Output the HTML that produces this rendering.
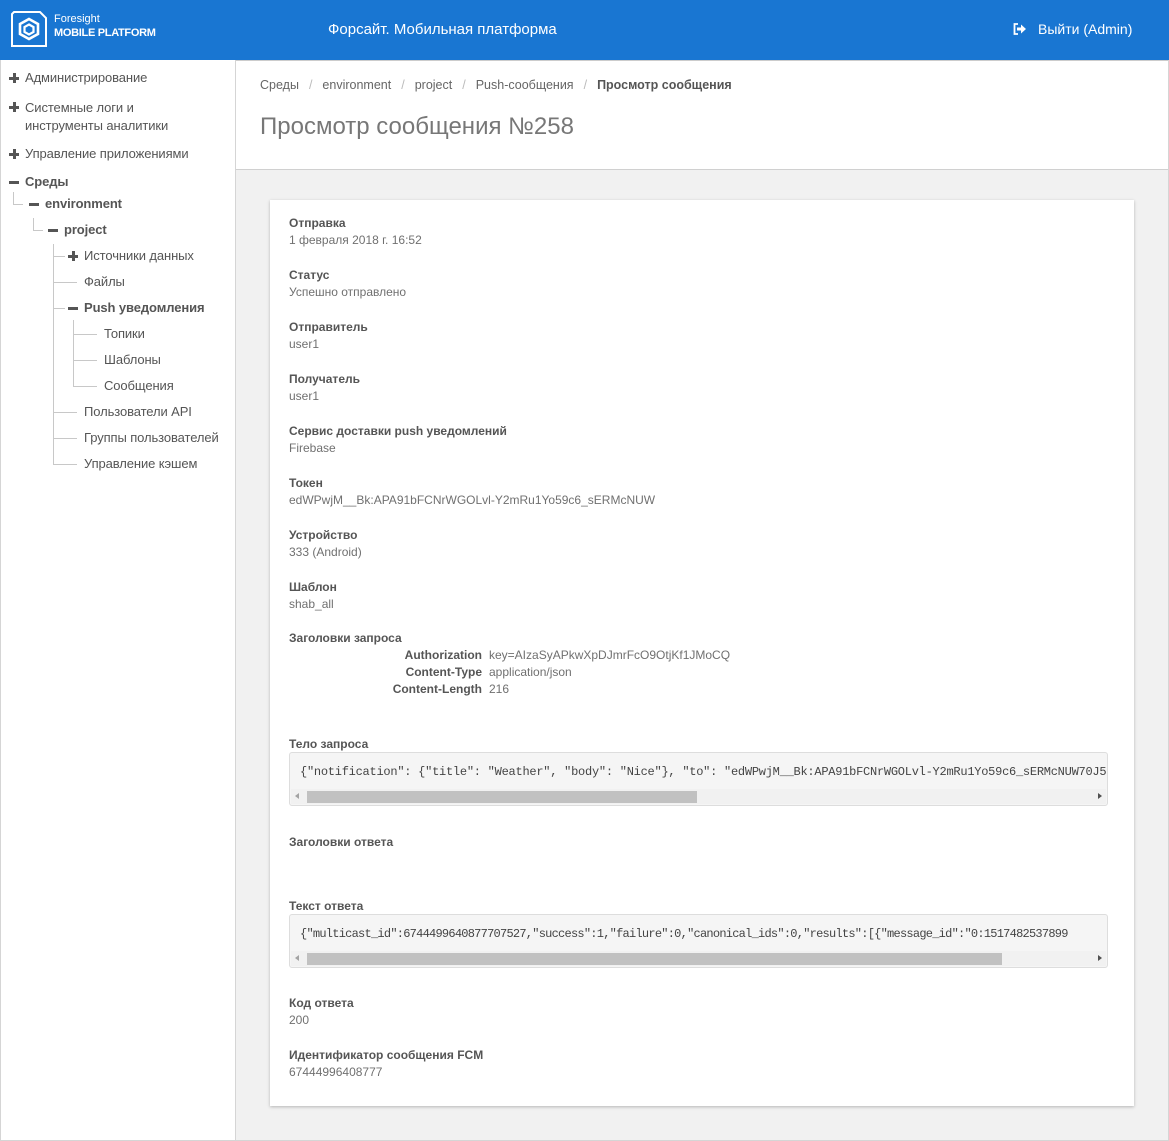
<!DOCTYPE html>
<html><head><meta charset="utf-8"><style>
*{box-sizing:border-box;margin:0;padding:0}
body{width:1169px;height:1141px;overflow:hidden;font-family:"Liberation Sans",sans-serif;background:#fff;position:relative;color:#555}
.hdr{position:absolute;left:0;top:0;width:1169px;height:60px;background:#1976d2;color:#fff}
.side{position:absolute;left:0;top:60px;width:236px;height:1081px;border-right:1px solid #d5d5d5;border-left:1px solid #d5d5d5;border-bottom:1px solid #d5d5d5;background:#fff}
.t{position:absolute;font-size:13px;color:#555;white-space:nowrap;letter-spacing:-0.1px}
.b{font-weight:bold}
.ln{position:absolute;background:#c8c8c8}
.plus,.minus{position:absolute;width:10px;height:10px}
.plus:before,.minus:before{content:"";position:absolute;left:0;top:4px;width:10px;height:2.5px;background:#555}
.plus:after{content:"";position:absolute;left:4px;top:0;width:2.5px;height:10px;background:#555}
.main{position:absolute;left:236px;top:60px;width:933px;height:1081px;background:#f1f1f1;border-right:1px solid #d5d5d5;border-bottom:1px solid #d5d5d5}
.top{position:absolute;left:0;top:0;width:932px;height:110px;background:#fff;border-bottom:1px solid #d0d0d0;border-top:1px solid #ccc}
.card{position:absolute;left:34px;top:140px;width:864px;height:906px;background:#fff;box-shadow:0 1px 3px rgba(0,0,0,.25)}
.lab{position:absolute;left:19px;font-size:12px;font-weight:bold;color:#555}
.val{position:absolute;left:19px;font-size:12px;color:#707070}
.pre{position:absolute;left:19px;width:819px;height:54px;background:#f5f5f5;border:1px solid #ddd;border-radius:3px;overflow:hidden}
.pre .c{position:absolute;left:10px;top:12px;font-family:"Liberation Mono",monospace;font-size:12px;color:#444;white-space:nowrap}
.sb{position:absolute;left:1px;right:1px;bottom:1px;height:15px;background:#f1f1f1}
.sb .th{position:absolute;left:16px;top:2px;height:12px;background:#c1c1c1}
.sb .la{position:absolute;left:4px;top:4px;border:3px solid transparent;border-right:4px solid #a3a3a3;border-left:0}
.sb .ra{position:absolute;right:4px;top:4px;border:3px solid transparent;border-left:4px solid #505050;border-right:0}
.sep{color:#bbb;margin:0 10px}
</style></head><body>
<div class="hdr">
  <svg style="position:absolute;left:10px;top:10px" width="38" height="38" viewBox="0 0 38 38">
    <path d="M4 2 H30 L36 8 V36 H2 V4 Z" fill="none" stroke="#fff" stroke-width="2"/>
    <path d="M19 9 L28 14 V24 L19 29 L10 24 V14 Z" fill="none" stroke="#fff" stroke-width="2.6"/>
    <path d="M19 14.5 L23.5 17 V22 L19 24.5 L14.5 22 V17 Z" fill="none" stroke="#fff" stroke-width="2.2"/>
  </svg>
  <div style="position:absolute;left:54px;top:13px;font-size:11px">Foresight</div>
  <div style="position:absolute;left:54px;top:27px;font-size:11px;font-weight:bold;letter-spacing:-0.3px">MOBILE PLATFORM</div>
  <div style="position:absolute;left:328px;top:21px;font-size:15px">Форсайт. Мобильная платформа</div>
  <svg style="position:absolute;left:1013px;top:23px" width="14" height="12" viewBox="0 0 14 12"><path d="M5 1H1.5V11H5" fill="none" stroke="#fff" stroke-width="1.8"/><path d="M4 4.5H8V1.5L13 6L8 10.5V7.5H4Z" fill="#fff"/></svg>
  <div style="position:absolute;left:1038px;top:21px;font-size:14px">Выйти (Admin)</div>
</div>
<div class="side">
  <div class="plus" style="left:8px;top:13px"></div><div class="t" style="left:24px;top:10px">Администрирование</div>
  <div class="plus" style="left:8px;top:42px"></div><div class="t" style="left:24px;top:39px;line-height:18px">Системные логи и<br>инструменты аналитики</div>
  <div class="plus" style="left:8px;top:89px"></div><div class="t" style="left:24px;top:86px">Управление приложениями</div>
  <div class="minus" style="left:8px;top:117px"></div><div class="t b" style="left:24px;top:114px">Среды</div>
  <div class="ln" style="left:12px;top:132px;width:1px;height:13px"></div><div class="ln" style="left:12px;top:144px;width:10px;height:1px"></div>
  <div class="minus" style="left:28px;top:139px"></div><div class="t b" style="left:44px;top:136px">environment</div>
  <div class="ln" style="left:32px;top:158px;width:1px;height:13px"></div><div class="ln" style="left:32px;top:170px;width:10px;height:1px"></div>
  <div class="minus" style="left:47px;top:165px"></div><div class="t b" style="left:63px;top:162px">project</div>
  <div class="ln" style="left:52px;top:184px;width:1px;height:221px"></div>
  <div class="ln" style="left:52px;top:196px;width:12px;height:1px"></div>
  <div class="plus" style="left:67px;top:191px"></div><div class="t" style="left:83px;top:188px">Источники данных</div>
  <div class="ln" style="left:52px;top:222px;width:24px;height:1px"></div><div class="t" style="left:83px;top:214px">Файлы</div>
  <div class="ln" style="left:52px;top:248px;width:12px;height:1px"></div>
  <div class="minus" style="left:67px;top:243px"></div><div class="t b" style="left:83px;top:240px">Push уведомления</div>
  <div class="ln" style="left:72px;top:260px;width:1px;height:67px"></div>
  <div class="ln" style="left:72px;top:274px;width:24px;height:1px"></div><div class="t" style="left:103px;top:266px">Топики</div>
  <div class="ln" style="left:72px;top:300px;width:24px;height:1px"></div><div class="t" style="left:103px;top:292px">Шаблоны</div>
  <div class="ln" style="left:72px;top:326px;width:24px;height:1px"></div><div class="t" style="left:103px;top:318px">Сообщения</div>
  <div class="ln" style="left:52px;top:352px;width:24px;height:1px"></div><div class="t" style="left:83px;top:344px">Пользователи API</div>
  <div class="ln" style="left:52px;top:378px;width:24px;height:1px"></div><div class="t" style="left:83px;top:370px">Группы пользователей</div>
  <div class="ln" style="left:52px;top:404px;width:24px;height:1px"></div><div class="t" style="left:83px;top:396px">Управление кэшем</div>
</div>
<div class="main">
  <div class="top">
    <div style="position:absolute;left:24px;top:17px;font-size:12.5px;color:#666;white-space:nowrap">Среды<span class="sep">/</span>environment<span class="sep">/</span>project<span class="sep">/</span>Push-сообщения<span class="sep">/</span><b style="color:#555">Просмотр сообщения</b></div>
    <div style="position:absolute;left:24px;top:52px;font-size:24px;color:#777;font-weight:300">Просмотр сообщения №258</div>
  </div>
  <div class="card">
    <div class="lab" style="top:16px">Отправка</div><div class="val" style="top:33px">1 февраля 2018 г. 16:52</div>
    <div class="lab" style="top:68px">Статус</div><div class="val" style="top:85px">Успешно отправлено</div>
    <div class="lab" style="top:120px">Отправитель</div><div class="val" style="top:137px">user1</div>
    <div class="lab" style="top:172px">Получатель</div><div class="val" style="top:189px">user1</div>
    <div class="lab" style="top:224px">Сервис доставки push уведомлений</div><div class="val" style="top:241px">Firebase</div>
    <div class="lab" style="top:276px">Токен</div><div class="val" style="top:293px">edWPwjM__Bk:APA91bFCNrWGOLvl-Y2mRu1Yo59c6_sERMcNUW</div>
    <div class="lab" style="top:328px">Устройство</div><div class="val" style="top:345px">333 (Android)</div>
    <div class="lab" style="top:380px">Шаблон</div><div class="val" style="top:397px">shab_all</div>
    <div class="lab" style="top:431px">Заголовки запроса</div>
    <div class="lab" style="top:448px;left:0;width:212px;text-align:right">Authorization</div><div class="val" style="top:448px;left:219px;width:245px;overflow:hidden;white-space:nowrap">key=AIzaSyAPkwXpDJmrFcO9OtjKf1JMoCQ</div>
    <div class="lab" style="top:465px;left:0;width:212px;text-align:right">Content-Type</div><div class="val" style="top:465px;left:219px">application/json</div>
    <div class="lab" style="top:482px;left:0;width:212px;text-align:right">Content-Length</div><div class="val" style="top:482px;left:219px">216</div>
    <div class="lab" style="top:537px">Тело запроса</div>
    <div class="pre" style="top:552px"><div class="c" style="letter-spacing:-0.25px">{"notification": {"title": "Weather", "body": "Nice"}, "to": "edWPwjM__Bk:APA91bFCNrWGOLvl-Y2mRu1Yo59c6_sERMcNUW70J5Hz</div><div class="sb"><div class="la"></div><div class="th" style="width:390px"></div><div class="ra"></div></div></div>
    <div class="lab" style="top:635px">Заголовки ответа</div>
    <div class="lab" style="top:699px">Текст ответа</div>
    <div class="pre" style="top:714px"><div class="c" style="letter-spacing:-0.75px">{"multicast_id":6744499640877707527,"success":1,"failure":0,"canonical_ids":0,"results":[{"message_id":"0:1517482537899</div><div class="sb"><div class="la"></div><div class="th" style="width:695px"></div><div class="ra"></div></div></div>
    <div class="lab" style="top:796px">Код ответа</div><div class="val" style="top:813px">200</div>
    <div class="lab" style="top:848px">Идентификатор сообщения FCM</div><div class="val" style="top:865px">67444996408777</div>
  </div>
</div>
</body></html>
